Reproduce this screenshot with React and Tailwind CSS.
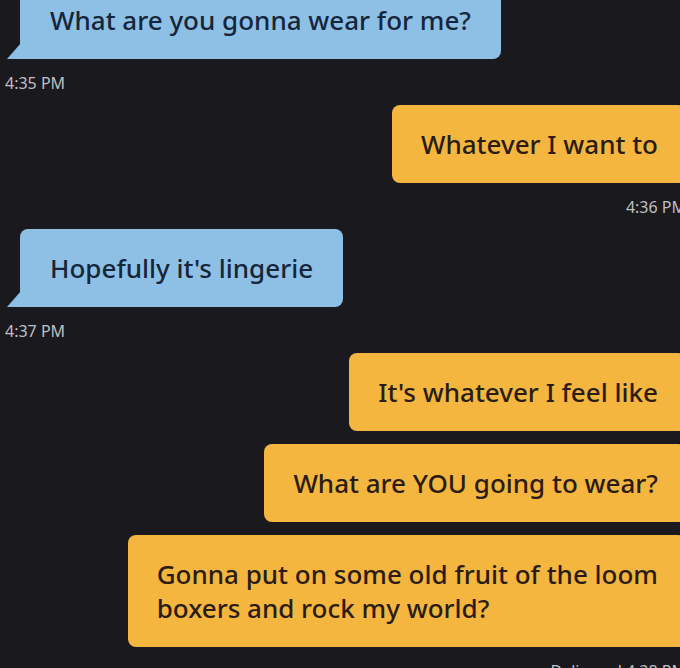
import React from 'react';

const messages = [
  { id: 1, from: 'them', text: 'What are you gonna wear for me?', time: '4:35 PM' },
  { id: 2, from: 'me', text: 'Whatever I want to', time: '4:36 PM' },
  { id: 3, from: 'them', text: "Hopefully it's lingerie", time: '4:37 PM' },
  { id: 4, from: 'me', text: "It's whatever I feel like" },
  { id: 5, from: 'me', text: 'What are YOU going to wear?' },
  { id: 6, from: 'me', text: ['Gonna put on some old fruit of the loom', 'boxers and rock my world?'], time: 'Delivered 4:38 PM' },
];

const Received = ({ text }) => (
  <div className="relative self-start ml-[20px] rounded-[8px] rounded-bl-none bg-[#8ec0e6] px-[30px] py-[22px] text-[26px] leading-[34px] font-medium text-[#16263a]">
    {text}
    {/* little tail on the bottom left */}
    <svg className="absolute -left-[13px] bottom-0" width="14" height="16" viewBox="0 0 14 16">
      <polygon points="14,0 14,16 0,16" fill="#8ec0e6" />
    </svg>
  </div>
);

const Sent = ({ text }) => (
  <div className="self-end rounded-[8px] bg-[#f4b63e] pl-[29px] pr-[28px] py-[22px] text-[26px] leading-[34px] font-medium text-[#2a1c12]">
    {Array.isArray(text) ? text.map((line) => <div key={line}>{line}</div>) : text}
  </div>
);

export default function App() {
  return (
    <div className="h-[668px] w-[680px] overflow-hidden bg-[#1a191e]" style={{ fontFamily: '"Noto Sans", sans-serif' }}>
      <div className="-mt-[19px] flex w-[686px] flex-col">
        {messages.map((m, i) => {
          const next = messages[i + 1];
          const gap = !m.time && next ? 'mb-[13px]' : '';
          return (
            <React.Fragment key={m.id}>
              <div className={`flex flex-col ${gap}`}>
                {m.from === 'them' ? <Received text={m.text} /> : <Sent text={m.text} />}
              </div>
              {m.time && (
                <div
                  className={`mt-[15px] mb-[13px] text-[16px] leading-[18px] text-[#bfbfc2] ${m.from === 'them' ? 'self-start ml-[5px]' : 'self-end mr-[0px]'}`}
                >
                  {m.time}
                </div>
              )}
            </React.Fragment>
          );
        })}
      </div>
    </div>
  );
}
